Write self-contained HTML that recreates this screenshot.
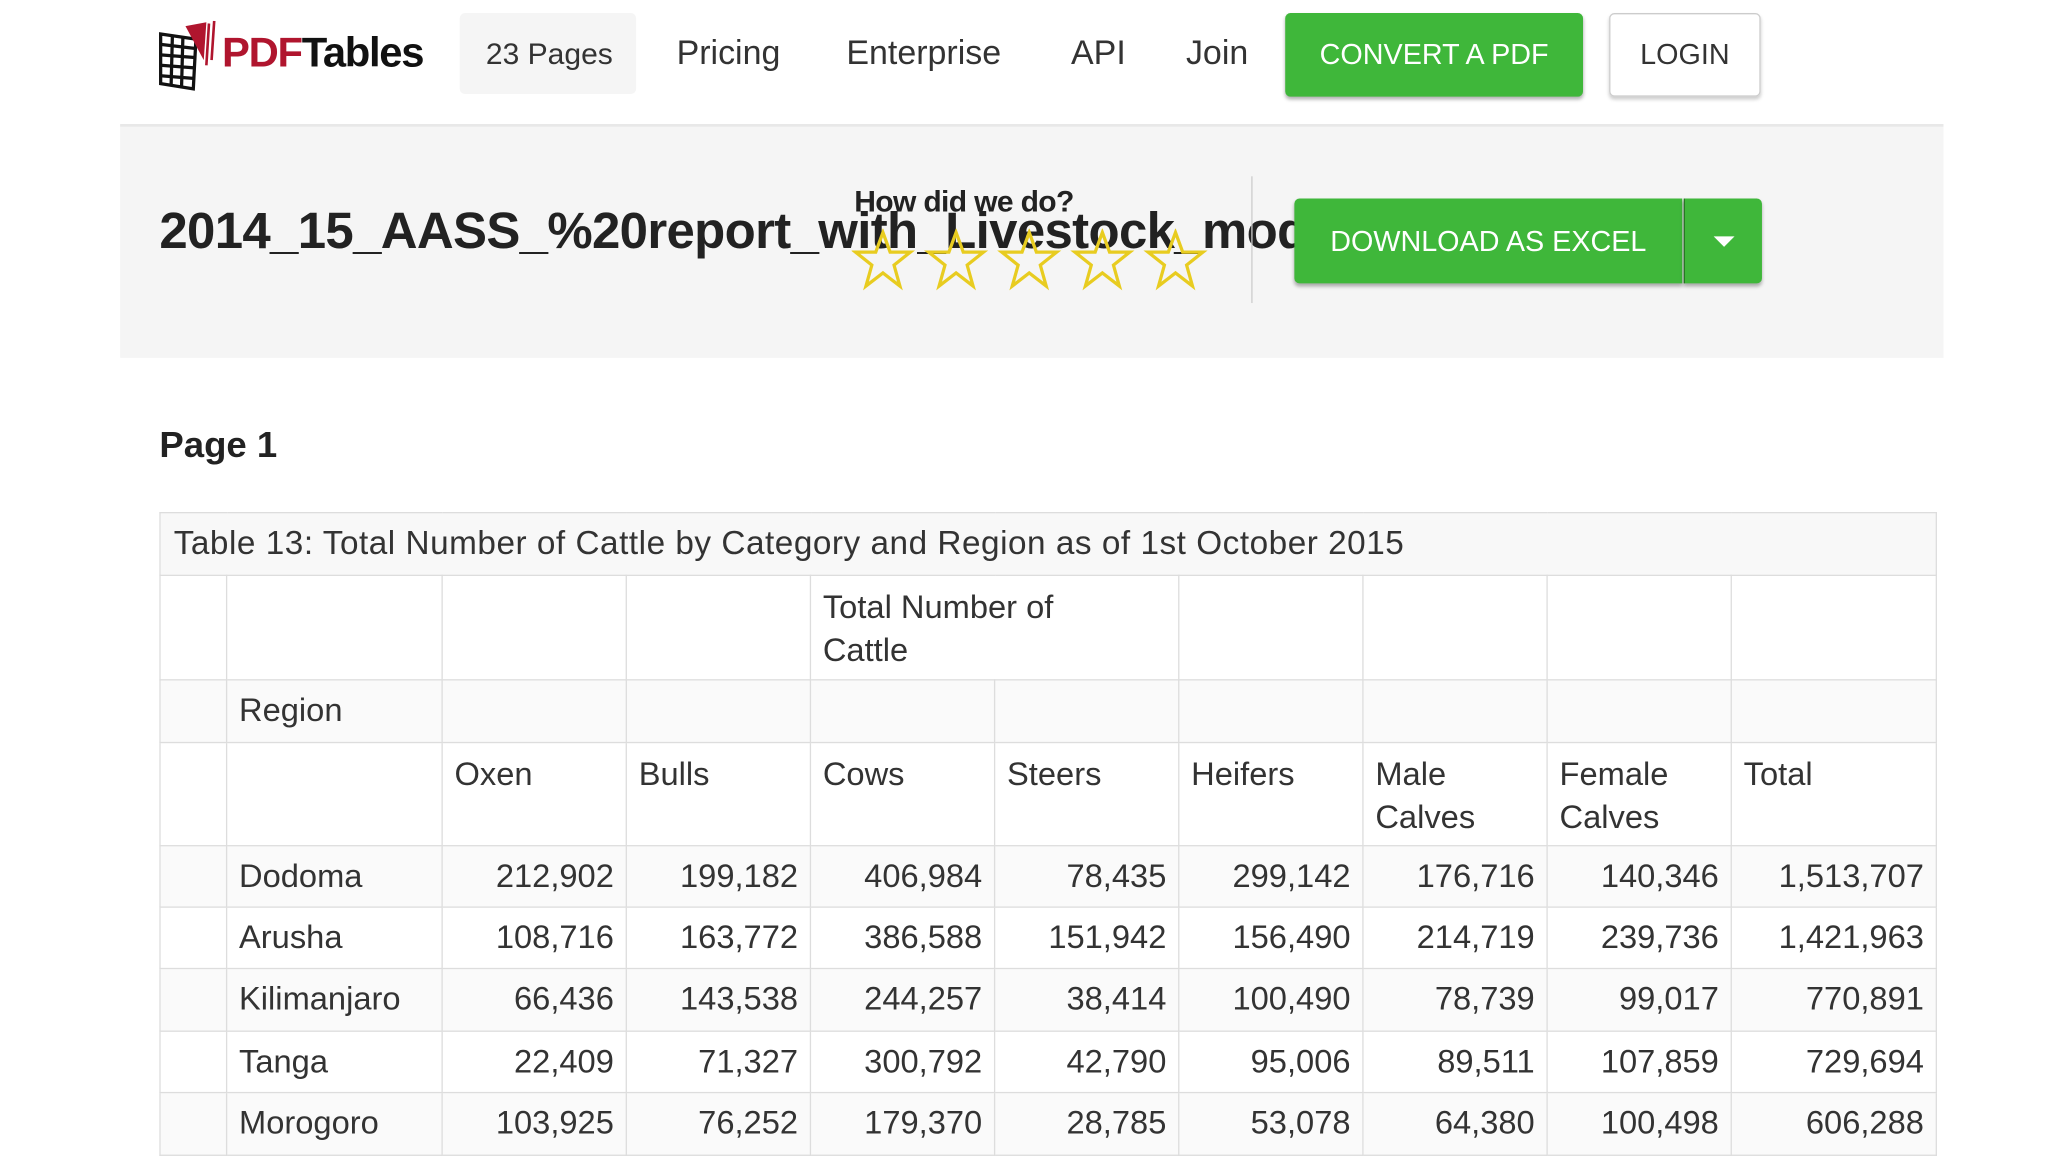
<!DOCTYPE html>
<html><head><meta charset="utf-8"><style>
html,body{margin:0;padding:0;background:#fff;width:2048px;height:1152px;overflow:hidden}
#w{position:absolute;left:0;top:0;width:1568px;height:882px;transform:scale(1.30612);transform-origin:0 0;font-family:"Liberation Sans",sans-serif;color:#333}
.a{position:absolute}
.nav{font-size:26px;color:#333;top:25px}
.btn{background:#3fb73a;color:#fff;border-radius:4px;box-shadow:0 2px 3px rgba(0,0,0,.3);display:flex;align-items:center;justify-content:center;font-size:22px}
table{position:absolute;left:122px;top:392px;border-collapse:collapse;font-size:25px;color:#333}
td{border:1.5px solid #ddd;padding:0 9px;vertical-align:top;line-height:33px}
td.n{text-align:right;vertical-align:middle}
</style></head><body><div id="w">
<svg class="a" style="left:120px;top:16px" width="50" height="54" viewBox="0 0 50 54">
<g fill="none" stroke="#111" stroke-width="2.5"><path d="M3 10 L30 14 L28 52 L3 48 Z"/><path d="M3 18 L29 21 M3 26 L29 28 M3 34 L29 36 M3 42 L28 44 M12 11 L11 50 M20 13 L19 51"/></g>
<path d="M22 4 L38 1 L36 30 Z" fill="#b0152e"/><path d="M40 2 L38 34 M44 0 L42 30" stroke="#b0152e" stroke-width="2"/></svg>
<div class="a" style="left:170px;top:22px;font-size:32px;font-weight:bold;letter-spacing:-1px"><span style="color:#b0152e">PDF</span><span style="color:#111">Tables</span></div>
<div class="a" style="left:352px;top:10px;width:135px;height:62px;background:#f5f5f5;border-radius:4px"></div>
<div class="a nav" style="left:372px;font-size:23px;top:28px">23 Pages</div>
<div class="a nav" style="left:518px">Pricing</div>
<div class="a nav" style="left:648px">Enterprise</div>
<div class="a nav" style="left:820px">API</div>
<div class="a nav" style="left:908px">Join</div>
<div class="a btn" style="left:984px;top:10px;width:228px;height:64px">CONVERT A PDF</div>
<div class="a" style="left:1232px;top:10px;width:114px;height:62px;border:1.5px solid #ccc;border-radius:4px;box-shadow:0 2px 3px rgba(0,0,0,.2);display:flex;align-items:center;justify-content:center;font-size:22px">LOGIN</div>
<div class="a" style="left:92px;top:95px;width:1396px;height:177px;background:#f5f5f5;border-top:2px solid #e8e8e8"></div>
<div class="a" style="left:122px;top:156px;width:870px;overflow:hidden;white-space:nowrap;font-size:39px;font-weight:bold;color:#222;letter-spacing:-0.5px">2014_15_AASS_%20report_with_Livestock_module</div>
<div class="a" style="left:654px;top:141px;font-size:23px;font-weight:bold;color:#222;letter-spacing:-0.5px">How did we do?</div>
<svg class="a" style="left:652px;top:175px" width="280" height="50" viewBox="0 0 280 50">
<g fill="none" stroke="#e8cc20" stroke-width="2.5">
<path id="s" d="M24 3 L29.5 18 L45 18 L32.5 28 L37 44 L24 34 L11 44 L15.5 28 L3 18 L18.5 18 Z"/>
<use href="#s" x="56"/><use href="#s" x="112"/><use href="#s" x="168"/><use href="#s" x="224"/></g></svg>
<div class="a" style="left:958px;top:135px;width:1px;height:97px;background:#ccc"></div>
<div class="a btn" style="left:991px;top:152px;width:297px;height:65px;border-radius:4px 0 0 4px">DOWNLOAD AS EXCEL</div>
<div class="a btn" style="left:1289px;top:152px;width:59px;height:65px;border-radius:0 4px 4px 0;border-left:1.5px solid #236b20"><svg width="16" height="10"><path d="M0 1 L16 1 L8 9 Z" fill="#fff"/></svg></div>
<div class="a" style="left:122px;top:325px;font-size:28px;font-weight:bold;color:#222">Page 1</div>
<table>
<colgroup><col style="width:51px"><col style="width:165px"><col style="width:141px"><col style="width:141px"><col style="width:141px"><col style="width:141px"><col style="width:141px"><col style="width:141px"><col style="width:141px"><col style="width:157px"></colgroup>
<tr style="height:48px;background:#f8f8f8"><td colspan="10" style="vertical-align:middle;padding-left:10px;letter-spacing:0.4px;font-size:25.5px">Table 13: Total Number of Cattle by Category and Region as of 1st October 2015</td></tr>
<tr style="height:80px"><td></td><td></td><td></td><td></td><td colspan="2" style="padding-top:8px">Total Number of<br>Cattle</td><td></td><td></td><td></td><td></td></tr>
<tr style="height:48px;background:#fafafa"><td></td><td style="vertical-align:middle">Region</td><td></td><td></td><td></td><td></td><td></td><td></td><td></td><td></td></tr>
<tr style="height:79px"><td></td><td></td><td style="padding-top:8px">Oxen</td><td style="padding-top:8px">Bulls</td><td style="padding-top:8px">Cows</td><td style="padding-top:8px">Steers</td><td style="padding-top:8px">Heifers</td><td style="padding-top:8px">Male<br>Calves</td><td style="padding-top:8px">Female<br>Calves</td><td style="padding-top:8px">Total</td></tr>
<tr style="height:47px;background:#fafafa"><td></td><td style="vertical-align:middle">Dodoma</td><td class="n">212,902</td><td class="n">199,182</td><td class="n">406,984</td><td class="n">78,435</td><td class="n">299,142</td><td class="n">176,716</td><td class="n">140,346</td><td class="n">1,513,707</td></tr>
<tr style="height:47px"><td></td><td style="vertical-align:middle">Arusha</td><td class="n">108,716</td><td class="n">163,772</td><td class="n">386,588</td><td class="n">151,942</td><td class="n">156,490</td><td class="n">214,719</td><td class="n">239,736</td><td class="n">1,421,963</td></tr>
<tr style="height:48px;background:#fafafa"><td></td><td style="vertical-align:middle">Kilimanjaro</td><td class="n">66,436</td><td class="n">143,538</td><td class="n">244,257</td><td class="n">38,414</td><td class="n">100,490</td><td class="n">78,739</td><td class="n">99,017</td><td class="n">770,891</td></tr>
<tr style="height:47px"><td></td><td style="vertical-align:middle">Tanga</td><td class="n">22,409</td><td class="n">71,327</td><td class="n">300,792</td><td class="n">42,790</td><td class="n">95,006</td><td class="n">89,511</td><td class="n">107,859</td><td class="n">729,694</td></tr>
<tr style="height:48px;background:#fafafa"><td></td><td style="vertical-align:middle">Morogoro</td><td class="n">103,925</td><td class="n">76,252</td><td class="n">179,370</td><td class="n">28,785</td><td class="n">53,078</td><td class="n">64,380</td><td class="n">100,498</td><td class="n">606,288</td></tr>
</table>
</div></body></html>
